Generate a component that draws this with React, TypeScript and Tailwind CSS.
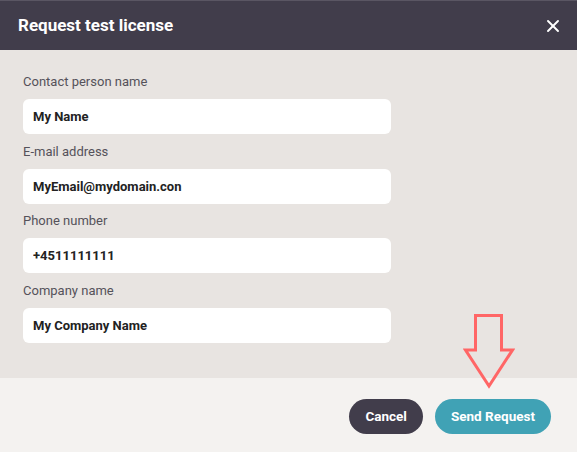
import React, { useState, useEffect, useRef } from 'react';
import { X } from 'lucide-react';

const FIELDS = [
  { label: 'Contact person name', value: 'My Name' },
  { label: 'E-mail address', value: 'MyEmail@mydomain.con' },
  { label: 'Phone number', value: '+4511111111' },
  { label: 'Company name', value: 'My Company Name' },
];

const App: React.FC = () => {
  const [values, setValues] = useState(FIELDS.map((f) => f.value));
  const lastRef = useRef<HTMLInputElement | null>(null);

  useEffect(() => {
    if (lastRef.current) {
      lastRef.current.focus();
      lastRef.current.setSelectionRange(12, 12);
    }
  }, []);

  return (
    <div className="w-[577px] h-[452px] flex flex-col font-['Roboto',sans-serif] overflow-hidden">
      <header className="h-[50px] shrink-0 bg-[#413d4b] border-t border-[#5a5663] flex items-center justify-between pl-[18px] pr-[14px]">
        <h1 className="text-white text-[17px] font-bold">Request test license</h1>
        <X className="w-[20px] h-[20px] text-white" strokeWidth={2.3} />
      </header>

      <main className="h-[328px] shrink-0 bg-[#e8e4e1] pl-[23px] pt-[24px] flex flex-col gap-[9.7px]">
        {FIELDS.map((f, i) => (
          <div key={f.label} className="flex flex-col gap-[9px]">
            <label className="text-[13px] leading-[16px] text-[#55525a]">{f.label}</label>
            <input
              ref={i === FIELDS.length - 1 ? lastRef : undefined}
              value={values[i]}
              onChange={(e) => setValues(values.map((v, j) => (j === i ? e.target.value : v)))}
              className="w-[368px] h-[35px] rounded-[6px] bg-white px-[10px] text-[13px] font-bold text-[#222] outline-none caret-[#222]"
            />
          </div>
        ))}
      </main>

      <footer className="relative flex-1 bg-[#f4f2f0] flex items-start justify-end gap-[12px] pt-[21px] pr-[26px]">
        <svg
          className="absolute left-[463px] top-[-65px]"
          width="52"
          height="76"
          viewBox="0 0 52 76"
          fill="none"
        >
          <path
            d="M12.5 2.5 H38.5 V37 H49.5 L26 73 L2.5 37 H12.5 Z"
            stroke="#ff6666"
            strokeWidth="3"
            strokeLinejoin="miter"
          />
        </svg>
        <button className="h-[35px] px-[16px] rounded-full bg-[#413d4b] text-white text-[13.5px] font-bold">
          Cancel
        </button>
        <button className="h-[35px] px-[16px] rounded-full bg-[#40a2b5] text-white text-[13.5px] font-bold">
          Send Request
        </button>
      </footer>
    </div>
  );
};

export default App;
